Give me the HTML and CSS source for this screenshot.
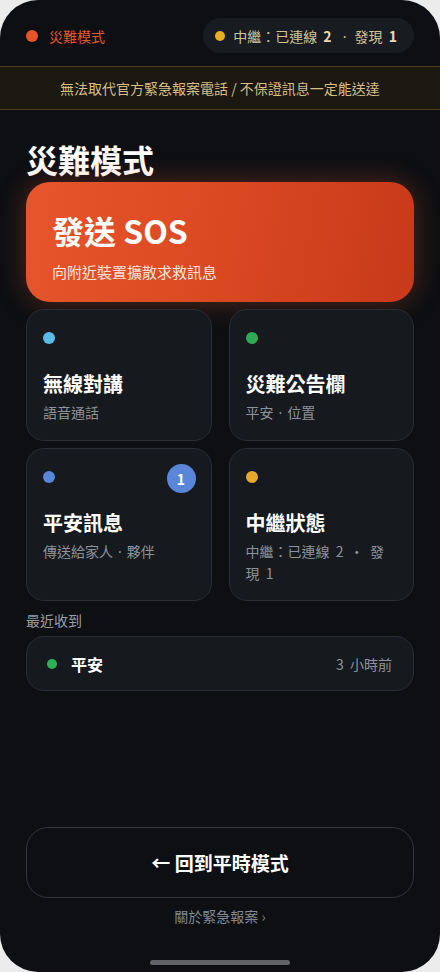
FILE: index.html
```html
<!DOCTYPE html>
<html lang="zh-Hant">
<head>
<meta charset="utf-8">
<title>災難模式</title>
<link rel="stylesheet" href="styles.css">
</head>
<body>
<div class="phone">
  <header class="status">
    <div class="mode"><span class="dot dot-red"></span><span>災難模式</span></div>
    <div class="pill"><span class="dot dot-yellow"></span><span>中繼：已連線 <b>2</b> <i>·</i> 發現 <b>1</b></span></div>
  </header>
  <div class="banner">無法取代官方緊急報案電話 / 不保證訊息一定能送達</div>
  <main class="content">
    <h1 class="title">災難模式</h1>
    <button class="sos">
      <span class="sos-title">發送 SOS</span>
      <span class="sos-sub">向附近裝置擴散求救訊息</span>
    </button>
    <div class="grid">
      <div class="card">
        <span class="cdot c-cyan"></span>
        <div class="card-title">無線對講</div>
        <div class="card-sub">語音通話</div>
      </div>
      <div class="card">
        <span class="cdot c-green"></span>
        <div class="card-title">災難公告欄</div>
        <div class="card-sub">平安<i>·</i>位置</div>
      </div>
      <div class="card">
        <span class="cdot c-blue"></span>
        <span class="badge">1</span>
        <div class="card-title">平安訊息</div>
        <div class="card-sub">傳送給家人<i>·</i>夥伴</div>
      </div>
      <div class="card">
        <span class="cdot c-yellow"></span>
        <div class="card-title">中繼狀態</div>
        <div class="card-sub">中繼：已連線 &nbsp;2 &nbsp;· &nbsp;發現 &nbsp;1</div>
      </div>
    </div>
    <div class="section-label">最近收到</div>
    <div class="recent">
      <span class="rdot"></span>
      <span class="recent-title">平安</span>
      <span class="recent-time">3 &nbsp;小時前</span>
    </div>
  </main>
  <footer class="bottom">
    <button class="back">← 回到平時模式</button>
    <div class="about">關於緊急報案 ›</div>
    <div class="home"></div>
  </footer>
</div>
</body>
</html>
```

FILE: styles.css
```css
* { box-sizing: border-box; }
html, body { margin: 0; padding: 0; }
body {
  background: #ececec;
  font-family: "Noto Sans CJK TC", "Noto Sans", sans-serif;
  color: #fff;
}
i { font-style: normal; font-family: "Noto Sans", sans-serif; }
.phone {
  width: 440px;
  height: 972px;
  border-radius: 38px;
  background: #0d0f13;
  overflow: hidden;
  display: flex;
  flex-direction: column;
}
.status {
  display: flex;
  align-items: center;
  justify-content: space-between;
  padding: 18px 26px 0 26px;
  height: 53px;
}
.mode {
  display: flex;
  align-items: center;
  gap: 11px;
  color: #e2552f;
  font-size: 14px;
}
.dot { display: inline-block; border-radius: 50%; }
.dot-red { width: 12px; height: 12px; background: #ea5429; }
.dot-yellow { width: 10px; height: 10px; background: #e9ad25; }
.pill {
  height: 35px;
  display: flex;
  align-items: center;
  gap: 8px;
  padding: 0 14px 0 12px;
  border-radius: 18px;
  background: #181b20;
  color: #d2c39c;
  font-size: 14px;
}
.pill b { color: #eadaad; font-weight: 700; margin: 0 3px; }
.pill i { margin: 0 5px; }
.banner {
  margin-top: 13px;
  height: 44px;
  display: flex;
  align-items: center;
  justify-content: center;
  background: #1b1811;
  border-top: 1px solid #4a3b1d;
  border-bottom: 1px solid #4a3b1d;
  color: #d6be86;
  font-size: 14px;
}
.content {
  padding: 0 26px;
  display: flex;
  flex-direction: column;
}
.title {
  margin: 29px 0 3px 0;
  font-size: 32px;
  line-height: 40px;
  font-weight: 700;
  color: #fff;
}
.sos {
  height: 120px;
  border: none;
  border-radius: 24px;
  background: linear-gradient(100deg, #e6552b 0%, #dc4a23 45%, #c8391a 100%);
  box-shadow: 0 0 28px rgba(230, 82, 40, 0.35);
  display: flex;
  flex-direction: column;
  align-items: flex-start;
  padding: 28px 27px 20px 26px;
  font-family: inherit;
  color: #fff;
  text-align: left;
}
.sos-title {
  font-size: 32px;
  line-height: 40px;
  font-weight: 700;
}
.sos-sub {
  margin-top: 12px;
  font-size: 15px;
  line-height: 20px;
  color: #fbe3da;
}
.grid {
  margin-top: 7px;
  display: grid;
  grid-template-columns: 1fr 1fr;
  column-gap: 17px;
  row-gap: 7px;
}
.card {
  position: relative;
  background: #16191e;
  border: 1px solid #2a2e34;
  border-radius: 18px;
  padding: 22px 15px 16px 16px;
  display: flex;
  flex-direction: column;
  align-items: flex-start;
}
.cdot { width: 12px; height: 12px; border-radius: 50%; }
.c-cyan { background: #5bbde6; }
.c-green { background: #2fa955; }
.c-blue { background: #5a86da; }
.c-yellow { background: #e8a829; }
.badge {
  position: absolute;
  top: 15px;
  right: 15px;
  width: 29px;
  height: 29px;
  border-radius: 50%;
  background: #5a86da;
  color: #fff;
  font-size: 14px;
  font-weight: 700;
  display: flex;
  align-items: center;
  justify-content: center;
}
.card-title {
  margin-top: 27px;
  font-size: 20px;
  line-height: 26px;
  font-weight: 700;
  color: #fff;
}
.card-sub {
  margin-top: 4px;
  font-size: 14px;
  line-height: 22px;
  color: #8e939b;
}
.card-sub i { margin: 0 5px; }
.section-label {
  margin-top: 9px;
  font-size: 14px;
  line-height: 20px;
  color: #9a9ea6;
}
.recent {
  margin-top: 6px;
  height: 55px;
  border: 1px solid #2a2e34;
  border-radius: 18px;
  background: #16191e;
  display: flex;
  align-items: center;
  padding: 0 21px 0 20px;
}
.rdot { width: 10px; height: 10px; border-radius: 50%; background: #2fb057; }
.recent-title {
  margin-left: 14px;
  font-size: 16px;
  font-weight: 700;
  color: #fff;
}
.recent-time {
  margin-left: auto;
  font-size: 14px;
  color: #8e939b;
}
.bottom {
  margin-top: auto;
  padding: 0 26px 7px 26px;
  display: flex;
  flex-direction: column;
  align-items: center;
}
.back {
  width: 100%;
  height: 71px;
  border: 1px solid #34373d;
  border-radius: 22px;
  background: transparent;
  color: #fff;
  font-family: inherit;
  font-size: 19px;
  font-weight: 700;
}
.about {
  margin-top: 8px;
  font-size: 14px;
  line-height: 20px;
  color: #83878f;
}
.home {
  margin-top: 34px;
  width: 140px;
  height: 5px;
  border-radius: 3px;
  background: #5f6166;
}
```
